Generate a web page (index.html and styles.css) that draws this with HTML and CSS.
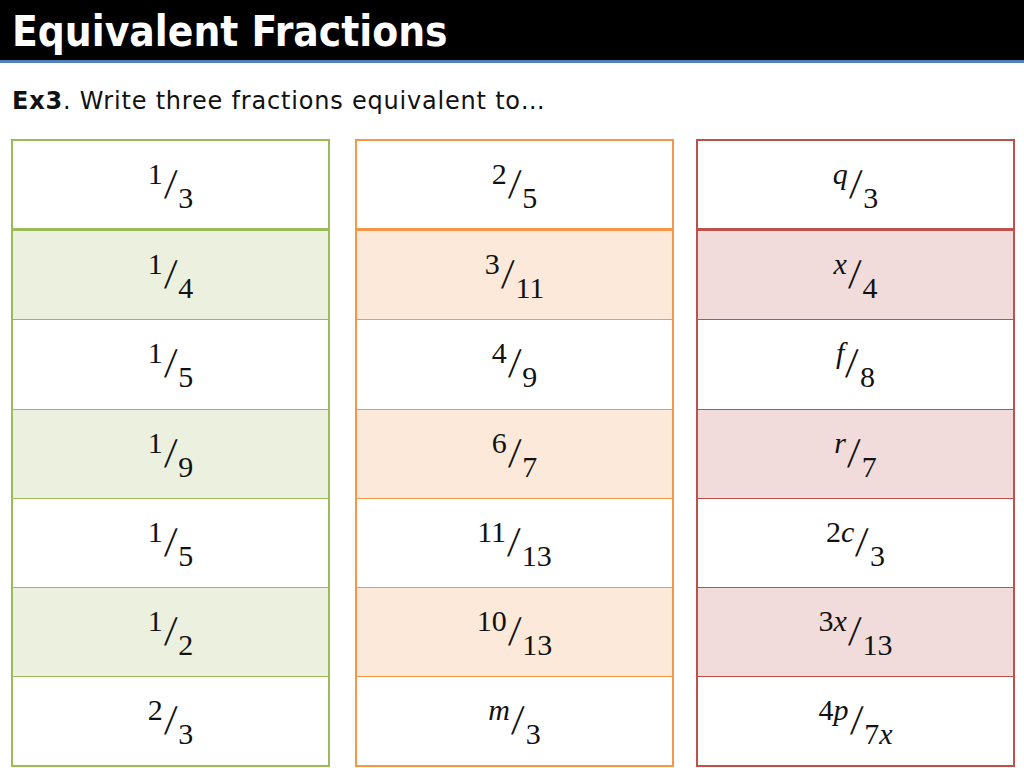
FILE: index.html
```html
<!DOCTYPE html>
<html>
<head>
<meta charset="utf-8">
<link rel="stylesheet" href="styles.css">
</head>
<body>
<header class="title-bar"><h1>Equivalent Fractions</h1></header>
<p class="prompt"><b>Ex3</b>. Write three fractions equivalent to…</p>
<main class="columns">
  <div class="col green">
    <div class="cell head"><span class="frac"><span class="num">1</span><span class="sl">/</span><span class="den">3</span></span></div>
    <div class="cell tint"><span class="frac"><span class="num">1</span><span class="sl">/</span><span class="den">4</span></span></div>
    <div class="cell"><span class="frac"><span class="num">1</span><span class="sl">/</span><span class="den">5</span></span></div>
    <div class="cell tint"><span class="frac"><span class="num">1</span><span class="sl">/</span><span class="den">9</span></span></div>
    <div class="cell"><span class="frac"><span class="num">1</span><span class="sl">/</span><span class="den">5</span></span></div>
    <div class="cell tint"><span class="frac"><span class="num">1</span><span class="sl">/</span><span class="den">2</span></span></div>
    <div class="cell"><span class="frac"><span class="num">2</span><span class="sl">/</span><span class="den">3</span></span></div>
  </div>
  <div class="col orange">
    <div class="cell head"><span class="frac"><span class="num">2</span><span class="sl">/</span><span class="den">5</span></span></div>
    <div class="cell tint"><span class="frac"><span class="num">3</span><span class="sl">/</span><span class="den">11</span></span></div>
    <div class="cell"><span class="frac"><span class="num">4</span><span class="sl">/</span><span class="den">9</span></span></div>
    <div class="cell tint"><span class="frac"><span class="num">6</span><span class="sl">/</span><span class="den">7</span></span></div>
    <div class="cell"><span class="frac"><span class="num">11</span><span class="sl">/</span><span class="den">13</span></span></div>
    <div class="cell tint"><span class="frac"><span class="num">10</span><span class="sl">/</span><span class="den">13</span></span></div>
    <div class="cell"><span class="frac"><span class="num"><i>m</i></span><span class="sl">/</span><span class="den">3</span></span></div>
  </div>
  <div class="col red">
    <div class="cell head"><span class="frac"><span class="num"><i>q</i></span><span class="sl">/</span><span class="den">3</span></span></div>
    <div class="cell tint"><span class="frac"><span class="num"><i>x</i></span><span class="sl">/</span><span class="den">4</span></span></div>
    <div class="cell"><span class="frac"><span class="num"><i>f</i></span><span class="sl">/</span><span class="den">8</span></span></div>
    <div class="cell tint"><span class="frac"><span class="num"><i>r</i></span><span class="sl">/</span><span class="den">7</span></span></div>
    <div class="cell"><span class="frac"><span class="num">2<i>c</i></span><span class="sl">/</span><span class="den">3</span></span></div>
    <div class="cell tint"><span class="frac"><span class="num">3<i>x</i></span><span class="sl">/</span><span class="den">13</span></span></div>
    <div class="cell"><span class="frac"><span class="num">4<i>p</i></span><span class="sl">/</span><span class="den">7<i>x</i></span></span></div>
  </div>
</main>
</body>
</html>
```
FILE: styles.css
```css
html, body {
  margin: 0;
  padding: 0;
  background: #ffffff;
}
body {
  width: 1024px;
  height: 768px;
  overflow: hidden;
  font-family: "DejaVu Sans", sans-serif;
}
.title-bar {
  background: #000000;
  height: 60px;
  border-bottom: 3px solid #4f81bd;
  display: flex;
  align-items: center;
  padding-left: 12px;
}
.title-bar h1 {
  margin: 0;
  color: #ffffff;
  font-family: "DejaVu Sans Condensed", "DejaVu Sans", sans-serif;
  font-size: 42px;
  font-weight: bold;
  line-height: 1;
  padding-top: 4px;
}
.prompt {
  margin: 0;
  padding: 24px 0 0 12px;
  height: 52px;
  box-sizing: border-box;
  font-size: 24px;
  letter-spacing: 0.8px;
  line-height: 28px;
  color: #111111;
}
.prompt b {
  font-weight: bold;
}
.columns {
  display: flex;
  padding: 24px 0 0 11px;
}
.col {
  width: 319px;
  box-sizing: border-box;
  display: grid;
  grid-template-rows: repeat(7, 89.2px);
  border-width: 2px;
  border-style: solid;
  --line: #9bbb59;
  --fill: #ebf1de;
  border-color: var(--line);
}
.col.orange {
  margin-left: 25px;
  --line: #f79646;
  --fill: #fde9d9;
}
.col.red {
  margin-left: 22px;
  --line: #c0504d;
  --fill: #f2dcdb;
}
.cell {
  display: flex;
  align-items: center;
  justify-content: center;
  border-top: 1px solid var(--line);
}
.cell:first-child {
  border-top: none;
}
.cell.head {
  border-bottom: 2px solid var(--line);
}
.cell.tint {
  background: var(--fill);
}

.frac {
  display: inline-flex;
  align-items: flex-start;
  font-family: "Liberation Serif", "DejaVu Serif", serif;
  color: #111111;
  height: 44px;
}
.frac i {
  font-style: italic;
}
.num {
  font-size: 30px;
  line-height: 26px;
  margin-top: -2px;
}
.sl {
  font-size: 42px;
  line-height: 42px;
  margin: 0 2px 0 2px;
  transform: skewX(-4deg);
}
.den {
  font-size: 30px;
  line-height: 26px;
  margin-top: 22px;
}
```
